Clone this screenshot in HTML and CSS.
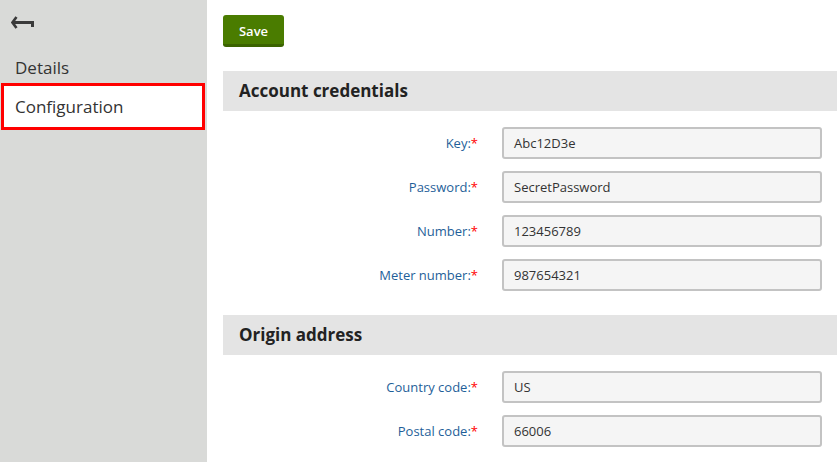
FILE: index.html
```html
<!DOCTYPE html>
<html>
<head>
<meta charset="utf-8">
<link rel="stylesheet" href="styles.css">
</head>
<body>
<div class="app">
  <aside class="sidebar">
    <div class="back">
      <svg width="24" height="14" viewBox="0 0 24 14">
        <polyline points="5.5,2 1.5,7.5 5.5,13" fill="none" stroke="#3a3a3a" stroke-width="2.6" stroke-linejoin="miter"/>
        <rect x="2" y="6" width="21" height="3" fill="#3a3a3a"/>
        <rect x="20" y="6" width="3" height="6" fill="#3a3a3a"/>
      </svg>
    </div>
    <nav class="nav">
      <div class="nav-item">Details</div>
      <div class="nav-item active">Configuration</div>
    </nav>
  </aside>
  <main class="main">
    <button class="btn-save">Save</button>
    <section class="section">
      <h2 class="section-title">Account credentials</h2>
      <div class="form">
        <label class="label">Key:<span class="req">*</span></label>
        <div class="input">Abc12D3e</div>
        <label class="label">Password:<span class="req">*</span></label>
        <div class="input">SecretPassword</div>
        <label class="label">Number:<span class="req">*</span></label>
        <div class="input">123456789</div>
        <label class="label">Meter number:<span class="req">*</span></label>
        <div class="input">987654321</div>
      </div>
    </section>
    <section class="section">
      <h2 class="section-title">Origin address</h2>
      <div class="form">
        <label class="label">Country code:<span class="req">*</span></label>
        <div class="input">US</div>
        <label class="label">Postal code:<span class="req">*</span></label>
        <div class="input">66006</div>
      </div>
    </section>
  </main>
</div>
</body>
</html>
```
FILE: styles.css
```css
html, body {
  margin: 0;
  padding: 0;
  height: 100%;
  overflow: hidden;
  background: #ffffff;
  font-family: "Open Sans", "Noto Sans", sans-serif;
}
.app {
  display: flex;
  height: 462px;
}
.sidebar {
  width: 207px;
  flex: 0 0 207px;
  background: #d9dad8;
  padding-top: 15px;
  box-sizing: border-box;
}
.back {
  padding-left: 11px;
  height: 14px;
}
.back svg { display: block; }
.nav {
  margin-top: 24px;
}
.nav-item {
  font-size: 17px;
  color: #333333;
  height: 30px;
  line-height: 30px;
  padding-left: 15px;
}
.nav-item.active {
  background: #ffffff;
  border: 3px solid #ff0000;
  height: 41px;
  line-height: 42px;
  margin-left: 1px;
  box-sizing: content-box;
  padding-left: 11px;
  width: 187px;
}
.main {
  flex: 1;
  padding-top: 15px;
  padding-left: 16px;
  box-sizing: border-box;
}
.btn-save {
  display: block;
  width: 61px;
  height: 32px;
  background: #4a7c00;
  border: none;
  border-bottom: 3px solid #3b6300;
  border-radius: 3px;
  color: #ffffff;
  font-family: "Open Sans", "Noto Sans", sans-serif;
  font-size: 13px;
  font-weight: 600;
  padding: 2px 0 0 0;
  margin: 0;
}
.section {
  margin-top: 24px;
}
.section-title {
  margin: 0;
  height: 40px;
  line-height: 40px;
  background: #e4e4e4;
  padding-left: 16px;
  font-size: 17px;
  font-weight: 700;
  color: #222222;
}
.form {
  display: grid;
  grid-template-columns: 255px 320px;
  column-gap: 24px;
  row-gap: 12px;
  margin-top: 16px;
  align-items: center;
}
.label {
  text-align: right;
  font-size: 13px;
  color: #1f5f99;
}
.req {
  color: #ff0000;
}
.input {
  height: 32px;
  box-sizing: border-box;
  border: 2px solid #c3c3c3;
  border-radius: 3px;
  background: #f5f5f5;
  font-size: 13px;
  color: #333333;
  line-height: 28px;
  padding-left: 10px;
}
```
